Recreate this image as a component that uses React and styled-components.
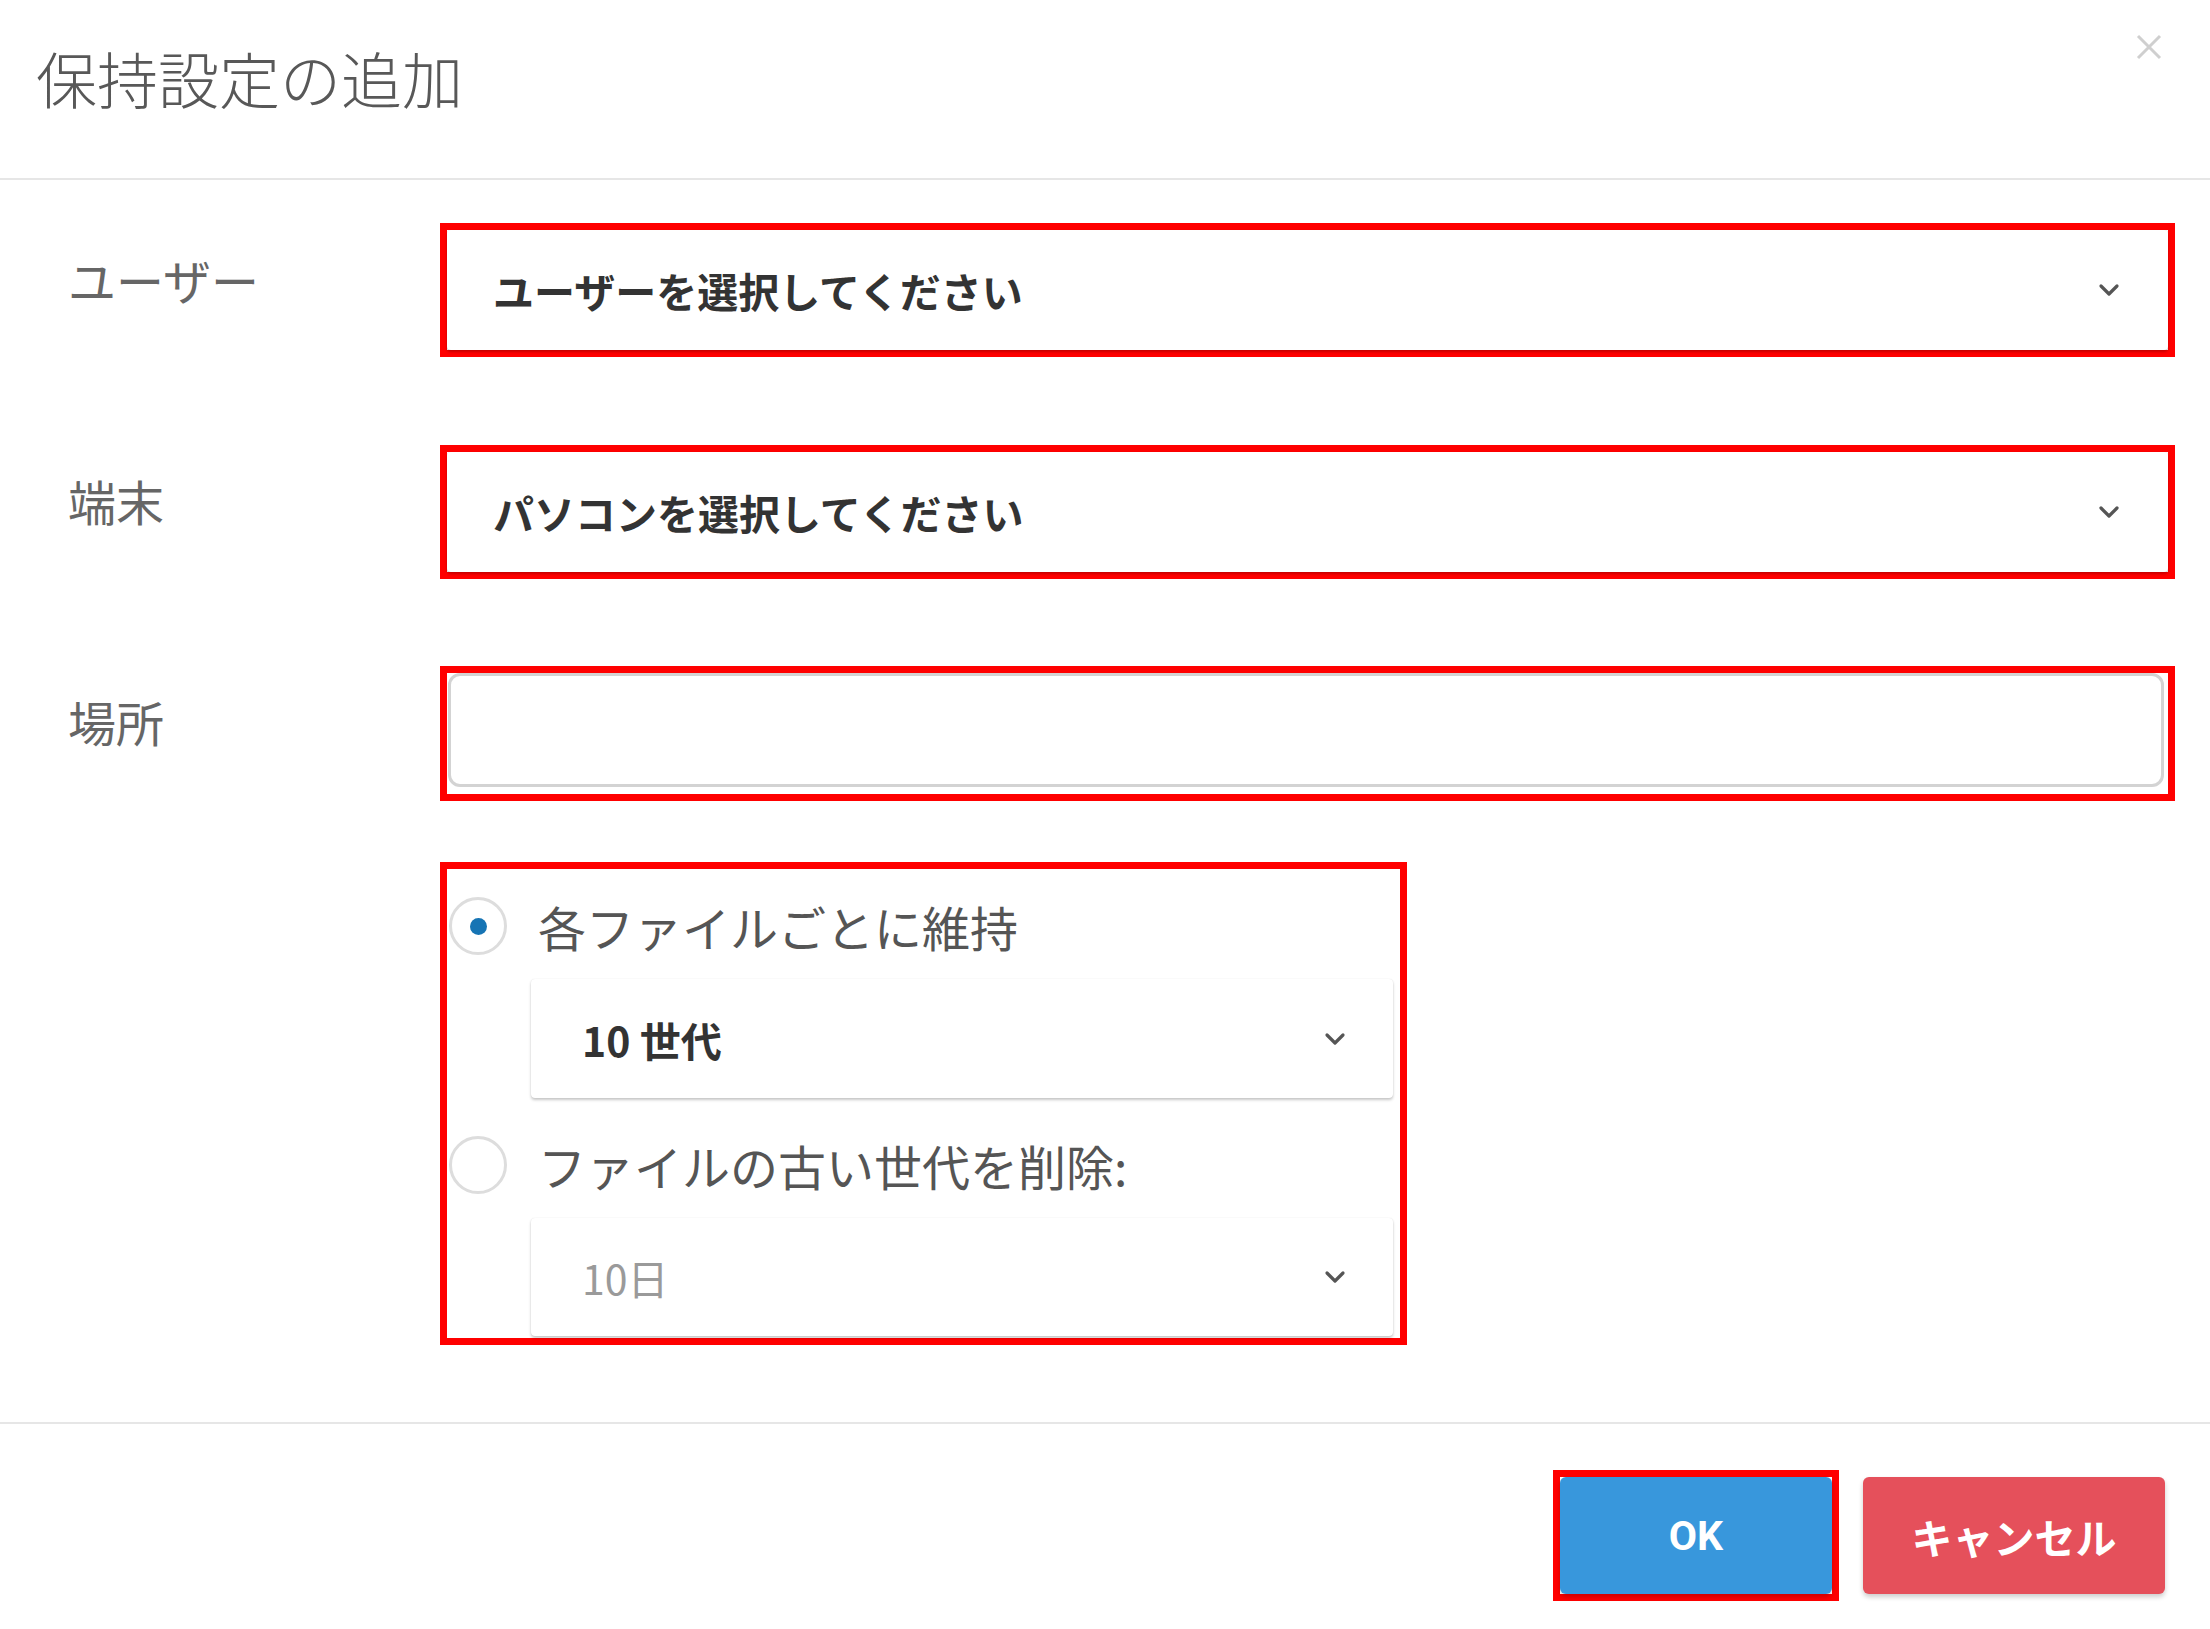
import React from "react";
import styled, { createGlobalStyle } from "styled-components";

const GlobalStyle = createGlobalStyle`
  html, body {
    margin: 0;
    padding: 0;
    background: #ffffff;
  }
  body {
    font-family: "Noto Sans CJK JP", "Noto Sans", "Liberation Sans", sans-serif;
  }
`;

const Dialog = styled.div`
  width: 2210px;
  height: 1629px;
  background: #ffffff;
  display: flex;
  flex-direction: column;
`;

const Header = styled.div`
  height: 178px;
  padding: 0 46px 0 36px;
  border-bottom: 2px solid #e6e6e6;
  display: flex;
  justify-content: space-between;
  align-items: flex-start;
`;

const Title = styled.h1`
  margin: 42px 0 0;
  font-size: 61px;
  line-height: 72px;
  font-weight: 300;
  color: #585858;
  letter-spacing: 0;
`;

const CloseButton = styled.button`
  margin-top: 32px;
  width: 30px;
  height: 30px;
  padding: 0;
  border: none;
  background: none;
  display: flex;
  align-items: center;
  justify-content: center;
  cursor: pointer;
`;

const Body = styled.div`
  padding: 43px 35px 77px 68px;
  border-bottom: 2px solid #e6e6e6;
  display: flex;
  flex-direction: column;
`;

const Row = styled.div`
  display: grid;
  grid-template-columns: 372px 1fr;
  align-items: start;
  margin-bottom: ${(p) => p.$gap || 0}px;
`;

const Label = styled.div`
  padding-top: ${(p) => p.$top || 25}px;
  font-size: 48px;
  line-height: 60px;
  color: #666666;
`;

const Highlight = styled.div`
  border: 7px solid #ff0000;
  width: ${(p) => (p.$width ? `${p.$width}px` : "auto")};
  box-sizing: border-box;
`;

const SelectBox = styled.div`
  height: ${(p) => p.$height || 120}px;
  box-sizing: border-box;
  padding: 0 ${(p) => p.$right || 48}px 0 ${(p) => p.$left || 46}px;
  background: #ffffff;
  border-radius: 4px;
  box-shadow: 0 2px 3px rgba(0, 0, 0, 0.22), 0 0 1px rgba(0, 0, 0, 0.12);
  display: flex;
  align-items: center;
  justify-content: space-between;
  font-size: 41px;
  font-weight: ${(p) => (p.$muted ? 400 : 700)};
  color: ${(p) => (p.$muted ? "#9a9a9a" : "#333333")};
`;

const InputWrap = styled.div`
  padding: 0 4px 7px 1px;
`;

const TextInput = styled.input`
  display: block;
  width: 100%;
  height: 114px;
  box-sizing: border-box;
  border: 3px solid #d3d3d3;
  border-radius: 12px;
  padding: 0 30px;
  font-size: 41px;
  font-family: inherit;
  outline: none;
`;

const RadioGroup = styled.div`
  padding: 28px 7px 2px 2px;
  display: flex;
  flex-direction: column;
`;

const RadioRow = styled.label`
  display: flex;
  align-items: center;
  gap: 31px;
  height: 58px;
  margin-top: ${(p) => p.$top || 0}px;
`;

const RadioCircle = styled.span`
  width: 58px;
  height: 58px;
  box-sizing: border-box;
  border: 3px solid #dddddd;
  border-radius: 50%;
  display: flex;
  align-items: center;
  justify-content: center;
  flex-shrink: 0;
  &::after {
    content: "";
    width: 17px;
    height: 17px;
    border-radius: 50%;
    background: ${(p) => (p.$checked ? "#1674b4" : "transparent")};
  }
`;

const RadioText = styled.span`
  font-size: 48px;
  line-height: 58px;
  color: #555555;
`;

const SubSelect = styled.div`
  margin: 24px 0 0 82px;
`;

const Footer = styled.div`
  padding: 46px 45px 0 0;
  display: flex;
  justify-content: flex-end;
  align-items: center;
  gap: 24px;
`;

const Button = styled.button`
  width: ${(p) => p.$width}px;
  height: 117px;
  border: none;
  border-radius: 6px;
  background: ${(p) => p.$bg};
  color: #ffffff;
  font-family: "Roboto", "Noto Sans CJK JP", sans-serif;
  font-size: 41px;
  font-weight: 700;
  box-shadow: 0 3px 5px rgba(0, 0, 0, 0.2);
  display: block;
  cursor: pointer;
`;

const Chevron = () => (
  <svg width="22" height="14" viewBox="0 0 22 14">
    <polyline
      points="3,3 11,11 19,3"
      fill="none"
      stroke="#555555"
      strokeWidth="3.2"
      strokeLinecap="round"
      strokeLinejoin="round"
    />
  </svg>
);

const CloseIcon = () => (
  <svg width="30" height="30" viewBox="0 0 30 30">
    <path d="M4 4 L26 26 M26 4 L4 26" stroke="#cfcfcf" strokeWidth="3" />
  </svg>
);

const App = () => {
  return (
    <>
      <GlobalStyle />
      <Dialog>
        <Header>
          <Title>保持設定の追加</Title>
          <CloseButton aria-label="close">
            <CloseIcon />
          </CloseButton>
        </Header>

        <Body>
          <Row $gap={88}>
            <Label $top={26}>ユーザー</Label>
            <Highlight>
              <SelectBox>
                <span>ユーザーを選択してください</span>
                <Chevron />
              </SelectBox>
            </Highlight>
          </Row>

          <Row $gap={87}>
            <Label>端末</Label>
            <Highlight>
              <SelectBox>
                <span>パソコンを選択してください</span>
                <Chevron />
              </SelectBox>
            </Highlight>
          </Row>

          <Row $gap={61}>
            <Label>場所</Label>
            <Highlight>
              <InputWrap>
                <TextInput type="text" />
              </InputWrap>
            </Highlight>
          </Row>

          <Row>
            <div />
            <Highlight $width={967}>
              <RadioGroup>
                <RadioRow>
                  <RadioCircle $checked />
                  <RadioText>各ファイルごとに維持</RadioText>
                </RadioRow>
                <SubSelect>
                  <SelectBox $height={119} $left={51} $right={47}>
                    <span>10 世代</span>
                    <Chevron />
                  </SelectBox>
                </SubSelect>
                <RadioRow $top={38}>
                  <RadioCircle />
                  <RadioText>ファイルの古い世代を削除:</RadioText>
                </RadioRow>
                <SubSelect>
                  <SelectBox $height={118} $left={51} $right={47} $muted>
                    <span>10日</span>
                    <Chevron />
                  </SelectBox>
                </SubSelect>
              </RadioGroup>
            </Highlight>
          </Row>
        </Body>

        <Footer>
          <Highlight>
            <Button $width={272} $bg="#3897dc">
              OK
            </Button>
          </Highlight>
          <Button $width={302} $bg="#e5505b">
            キャンセル
          </Button>
        </Footer>
      </Dialog>
    </>
  );
};

export default App;
